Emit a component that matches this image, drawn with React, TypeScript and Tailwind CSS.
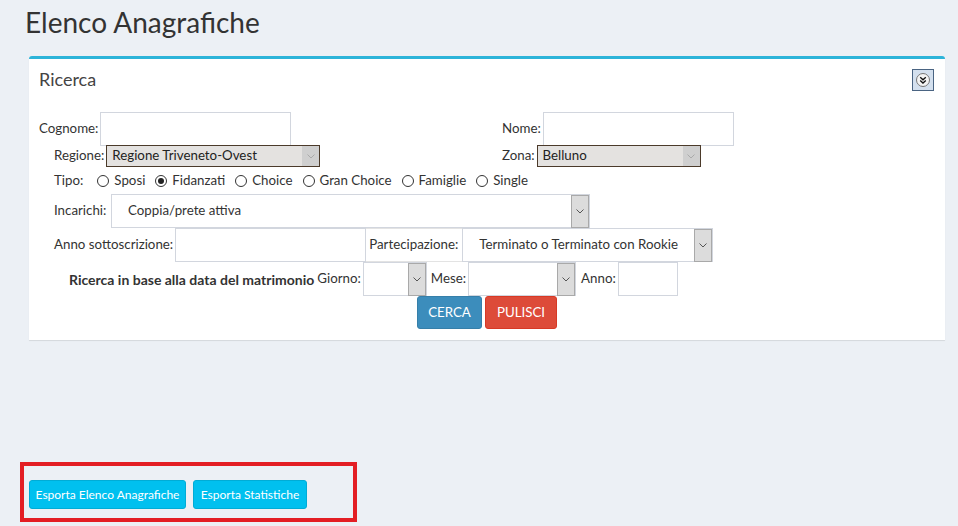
import React from "react";

const font = { fontFamily: "Lato, 'Noto Sans', sans-serif" };

const Chevron = ({ color = "#555" }: { color?: string }) => (
  <svg width="8" height="5" viewBox="0 0 8 5">
    <path d="M0.5 0.5 L4 4 L7.5 0.5" fill="none" stroke={color} strokeWidth="1" />
  </svg>
);

const Radio = ({ label, checked = false }: { label: string; checked?: boolean }) => (
  <label className="flex items-center mr-[10px]">
    <span className="w-[12px] h-[12px] rounded-full border border-[#333] bg-white flex items-center justify-center mr-[5px]">
      {checked && <span className="w-[6px] h-[6px] rounded-full bg-[#222]" />}
    </span>
    {label}
  </label>
);

// select bianca con bottone freccia grigio a destra
const Select = ({ width, value = "" }: { width: string; value?: string }) => (
  <div className={`${width} h-[34px] border border-[#d2d6de] bg-white flex items-center`}>
    <span className="flex-1 pl-[16px] truncate">{value}</span>
    <span className="w-[18px] h-[33px] bg-[#dcdcdc] border border-[#a9a9a9] flex items-center justify-center">
      <Chevron />
    </span>
  </div>
);

// select disabilitata (regione/zona)
const LockedSelect = ({ width, value }: { width: string; value: string }) => (
  <div className={`${width} h-[22px] border border-[#4b3a2a] bg-[#e4e2e0] flex items-center`}>
    <span className="flex-1 pl-[5px] truncate text-[#222]">{value}</span>
    <span className="w-[17px] h-[20px] bg-[#cfcfcf] flex items-center justify-center">
      <Chevron color="#aaa" />
    </span>
  </div>
);

const Input = ({ width }: { width: string }) => (
  <div className={`${width} h-[34px] border border-[#d2d6de] bg-white`} />
);

export default function App() {
  return (
    <div className="min-h-screen bg-[#ecf0f5] text-[#333] text-[13.3px]" style={font}>
      <h1 className="h-[44px] flex items-center px-[25px] text-[28px] text-[#333]">Elenco Anagrafiche</h1>

      <div className="mt-[12px] ml-[29px] mr-[13px] bg-white border-t-[3px] border-[#2db4d9] rounded-t-[3px] shadow-[0_1px_1px_rgba(0,0,0,0.1)]">
        <div className="h-[41px] flex items-center justify-between pl-[10px] pr-[11px]">
          <h3 className="text-[18px] text-[#444]">Ricerca</h3>
          <button className="w-[22px] h-[22px] bg-[#d4e0ee] border border-[#4a6482] flex items-center justify-center">
            <svg width="16" height="16" viewBox="0 0 16 16">
              <circle cx="8" cy="8" r="6.5" fill="#f4f4f4" stroke="#777" strokeWidth="1" />
              <path d="M5.2 5.2 L8 7.8 L10.8 5.2 M5.2 8.4 L8 11 L10.8 8.4" fill="none" stroke="#111" strokeWidth="1.3" />
            </svg>
          </button>
        </div>

        <div className="pt-[11px] pb-[11px] pl-[10px]">
          {/* cognome / nome + regione / zona */}
          <div className="flex">
            <div className="w-[463px]">
              <div className="flex items-center h-[34px] pt-[1px]">
                <span className="mr-[2px]">Cognome:</span>
                <Input width="w-[191px]" />
              </div>
              <div className="flex items-center h-[22px] pl-[15px]">
                <span className="mr-[2px]">Regione:</span>
                <LockedSelect width="w-[214px]" value="Regione Triveneto-Ovest" />
              </div>
            </div>
            <div>
              <div className="flex items-center h-[34px] pt-[1px]">
                <span className="mr-[2px]">Nome:</span>
                <Input width="w-[191px]" />
              </div>
              <div className="flex items-center h-[22px]">
                <span className="mr-[2px]">Zona:</span>
                <LockedSelect width="w-[164px]" value="Belluno" />
              </div>
            </div>
          </div>

          <div className="flex items-center h-[27px] pl-[15px]">
            <span className="mr-[14px]">Tipo:</span>
            <Radio label="Sposi" />
            <Radio label="Fidanzati" checked />
            <Radio label="Choice" />
            <Radio label="Gran Choice" />
            <Radio label="Famiglie" />
            <Radio label="Single" />
          </div>

          <div className="flex items-center h-[34px] pl-[15px]">
            <span className="w-[57px]">Incarichi:</span>
            <Select width="w-[479px]" value="Coppia/prete attiva" />
          </div>

          <div className="flex items-center h-[34px] pl-[15px]">
            <span className="mr-[2px]">Anno sottoscrizione:</span>
            <Input width="w-[191px]" />
            <span className="h-[34px] flex items-center px-[3px] border-y border-[#e3e3e3] w-[96px]">Partecipazione:</span>
            <Select width="w-[251px]" value="Terminato o Terminato con Rookie" />
          </div>

          <div className="flex items-center h-[34px] pl-[30px]">
            <span className="font-bold text-[14px] mr-[3px]">Ricerca in base alla data del matrimonio</span>
            <span className="mr-[2px]">Giorno:</span>
            <Select width="w-[64px]" />
            <span className="ml-[4px] mr-[2px]">Mese:</span>
            <Select width="w-[108px]" />
            <span className="ml-[5px] mr-[2px]">Anno:</span>
            <Input width="w-[60px]" />
          </div>

          <div className="flex justify-center gap-[3px] pr-[10px]">
            <button className="w-[65px] h-[33px] bg-[#3c8dbc] border border-[#367fa9] rounded-[3px] text-white">CERCA</button>
            <button className="w-[72px] h-[33px] bg-[#dd4b39] border border-[#d73925] rounded-[3px] text-white">PULISCI</button>
          </div>
        </div>
      </div>

      <div className="mt-[122px] ml-[20px] w-[337px] h-[60px] border-[4px] border-[#e31e24] flex items-start gap-[7px] pt-[14px] pl-[5px]">
        <button className="w-[157px] h-[29px] bg-[#00c0ef] border border-[#00acd6] rounded-[3px] text-white text-[12px]">
          Esporta Elenco Anagrafiche
        </button>
        <button className="w-[114px] h-[29px] bg-[#00c0ef] border border-[#00acd6] rounded-[3px] text-white text-[12px]">
          Esporta Statistiche
        </button>
      </div>
    </div>
  );
}
